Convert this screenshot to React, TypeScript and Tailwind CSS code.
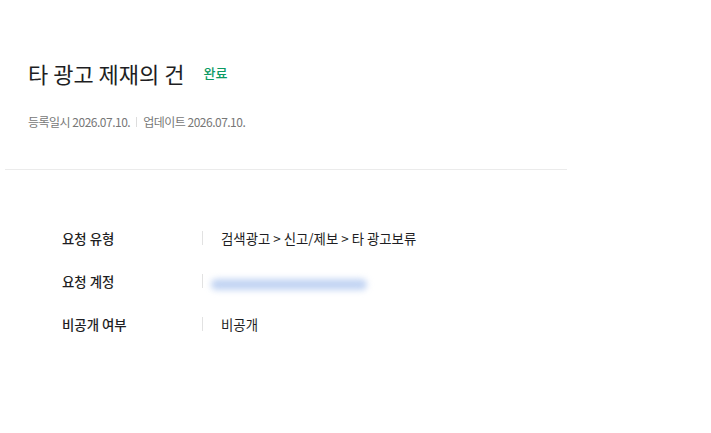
const font = { fontFamily: '"Noto Sans CJK KR", "Noto Sans", sans-serif' };

const rows = [
  { label: '요청 유형', value: '검색광고 > 신고/제보 > 타 광고보류' },
  { label: '요청 계정', value: 'blurred' },
  { label: '비공개 여부', value: '비공개' },
];

export default function App() {
  return (
    <div className="w-[711px] h-[433px] bg-white overflow-hidden" style={font}>
      <div className="w-[562px] ml-[5px] pt-[58px] pb-[39px] pl-[23px] border-b border-[#ebebeb]">
        <div className="flex items-center">
          <h1 className="text-[22px] leading-[30px] font-normal text-[#1e1e23]">
            타 광고 제재의 건
          </h1>
          <span className="ml-[19px] text-[13px] font-medium text-[#0b9a63]">완료</span>
        </div>
        <div className="mt-[26px] flex items-center text-[12px] leading-[16px] text-[#777] tracking-[-0.5px]">
          <span>등록일시 2026.07.10.</span>
          <span className="mx-[6px] w-px h-[10px] bg-[#ddd]" />
          <span>업데이트 2026.07.10.</span>
        </div>
      </div>
      <div className="pt-[58px] pl-[62px] flex flex-col gap-[23px]">
        {rows.map((r) => (
          <div key={r.label} className="flex items-center h-[20px] text-[13.4px] text-[#1e1e23]">
            <div className="w-[140px] font-medium">{r.label}</div>
            <span className="w-px h-[14px] bg-[#e2e2e2]" />
            <div className="pl-[18px]">
              {r.value === 'blurred' ? (
                <span className="inline-block -ml-[10px] mt-[12px] h-[11px] w-[156px] rounded-full bg-[#c2d4f3] blur-[3px] select-none" />
              ) : (
                r.value
              )}
            </div>
          </div>
        ))}
      </div>
    </div>
  );
}
